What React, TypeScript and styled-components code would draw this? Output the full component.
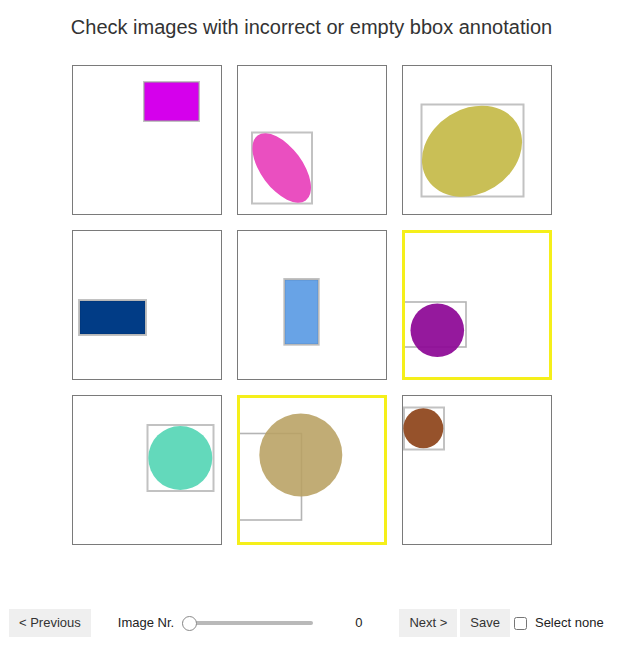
import React from "react";
import styled, { createGlobalStyle } from "styled-components";

const GlobalStyle = createGlobalStyle`
  html, body { margin: 0; padding: 0; background: #ffffff; }
  body { font-family: "Liberation Sans", Arial, sans-serif; color: #333333; }
`;

const Page = styled.div`
  width: 619px;
  height: 646px;
  padding-top: 15px;
  box-sizing: border-box;
`;

const Title = styled.h1`
  margin: 0;
  font-size: 20px;
  line-height: 24px;
  font-weight: normal;
  text-align: center;
  color: #333333;
  padding-left: 4px;
`;

const Grid = styled.div`
  margin: 26px 0 0 72px;
  display: grid;
  grid-template-columns: repeat(3, 150px);
  grid-auto-rows: 150px;
  gap: 15px;
`;

const Tile = styled.div<{ $selected: boolean }>`
  box-sizing: border-box;
  width: 150px;
  height: 150px;
  overflow: hidden;
  background: #ffffff;
  border: ${(p) => (p.$selected ? "3px solid #f5ef1a" : "1px solid #7a7a7a")};
`;

const Canvas = styled.svg`
  display: block;
`;

const Bar = styled.div`
  margin-top: 64px;
  height: 28px;
  display: flex;
  align-items: center;
  padding-left: 9px;
  font-size: 13px;
  line-height: 15px;
`;

const Button = styled.button<{ $ml?: number }>`
  height: 28px;
  padding: 0 10px 1px;
  border: none;
  background: #efefef;
  color: #333333;
  font-family: "Liberation Sans", Arial, sans-serif;
  font-size: 13px;
  margin-left: ${(p) => p.$ml ?? 0}px;
  cursor: pointer;
`;

const Label = styled.span<{ $ml?: number }>`
  margin-left: ${(p) => p.$ml ?? 0}px;
  margin-bottom: 1px;
  color: #222222;
  white-space: nowrap;
`;

const Slider = styled.input`
  -webkit-appearance: none;
  appearance: none;
  width: 131px;
  height: 16px;
  margin: 0 0 0 8px;
  background: transparent;
  &::-webkit-slider-runnable-track {
    height: 4px;
    background: #b9b9b9;
    border-radius: 2px;
  }
  &::-webkit-slider-thumb {
    -webkit-appearance: none;
    width: 15px;
    height: 15px;
    margin-top: -5.5px;
    border-radius: 50%;
    background: #ffffff;
    border: 1px solid #8a8a8a;
    box-sizing: border-box;
  }
`;

const Check = styled.input`
  width: 13px;
  height: 13px;
  margin: 0 0 0 4px;
`;

type Shape =
  | { kind: "rect"; x: number; y: number; w: number; h: number; fill: string }
  | { kind: "ellipse"; cx: number; cy: number; rx: number; ry: number; rot: number; fill: string; op?: number };

type TileData = {
  selected: boolean;
  bbox: { x: number; y: number; w: number; h: number };
  shape: Shape;
};

const tiles: TileData[] = [
  { selected: false, bbox: { x: 72, y: 17, w: 55, h: 39 }, shape: { kind: "rect", x: 72.5, y: 17.5, w: 54, h: 38, fill: "#d500ec" } },
  { selected: false, bbox: { x: 15, y: 67.5, w: 60, h: 71 }, shape: { kind: "ellipse", cx: 44.7, cy: 103, rx: 40.4, ry: 20.8, rot: 53.4, fill: "#ea4fc0" } },
  { selected: false, bbox: { x: 19.5, y: 39.5, w: 102, h: 92 }, shape: { kind: "ellipse", cx: 70, cy: 86.2, rx: 52.8, ry: 42.3, rot: -32.2, fill: "#c9bf56" } },
  { selected: false, bbox: { x: 7, y: 70, w: 67, h: 35 }, shape: { kind: "rect", x: 8, y: 71, w: 65, h: 33, fill: "#013c86" } },
  { selected: false, bbox: { x: 47.3, y: 49, w: 34.4, h: 65.7 }, shape: { kind: "rect", x: 48, y: 50, w: 33, h: 64, fill: "#68a3e6" } },
  { selected: true, bbox: { x: 1, y: 72, w: 63, h: 45 }, shape: { kind: "ellipse", cx: 35.3, cy: 100.3, rx: 26.8, ry: 26.8, rot: 0, fill: "#8d0896", op: 0.93 } },
  { selected: false, bbox: { x: 75.5, y: 30, w: 66, h: 66 }, shape: { kind: "ellipse", cx: 108.3, cy: 63, rx: 32, ry: 32, rot: 0, fill: "#63d9bb" } },
  { selected: true, bbox: { x: 1, y: 38.5, w: 63.5, h: 86.5 }, shape: { kind: "ellipse", cx: 63.8, cy: 60, rx: 41.5, ry: 41.5, rot: 0, fill: "#b8a062", op: 0.88 } },
  { selected: false, bbox: { x: 2, y: 12.5, w: 40, h: 42 }, shape: { kind: "ellipse", cx: 21.3, cy: 33.3, rx: 20, ry: 20, rot: 0, fill: "#96522b" } },
];

function ShapeView({ s }: { s: Shape }) {
  if (s.kind === "rect") {
    return <rect x={s.x} y={s.y} width={s.w} height={s.h} fill={s.fill} stroke="rgba(0,0,0,0.18)" strokeWidth={0.6} />;
  }
  return (
    <ellipse
      cx={s.cx}
      cy={s.cy}
      rx={s.rx}
      ry={s.ry}
      fill={s.fill}
      fillOpacity={s.op ?? 1}
      transform={`rotate(${s.rot} ${s.cx} ${s.cy})`}
    />
  );
}

function TileView({ t }: { t: TileData }) {
  const b = t.selected ? 3 : 1;
  const size = 150 - 2 * b;
  return (
    <Tile $selected={t.selected}>
      <Canvas width={size} height={size} viewBox={`${b} ${b} ${size} ${size}`}>
        <rect
          x={t.bbox.x}
          y={t.bbox.y}
          width={t.bbox.w}
          height={t.bbox.h}
          fill="none"
          stroke={t.selected ? "#b4b4b4" : "#c2c2c2"}
          strokeWidth={t.selected ? 1.6 : 2}
        />
        <ShapeView s={t.shape} />
      </Canvas>
    </Tile>
  );
}

export default function App() {
  return (
    <>
      <GlobalStyle />
      <Page>
        <Title>Check images with incorrect or empty bbox annotation</Title>
        <Grid>
          {tiles.map((t, i) => (
            <TileView key={i} t={t} />
          ))}
        </Grid>
        <Bar>
          <Button>&lt; Previous</Button>
          <Label $ml={27}>Image Nr.</Label>
          <Slider type="range" min={0} max={8} defaultValue={0} />
          <Label $ml={42}>0</Label>
          <Button $ml={37}>Next &gt;</Button>
          <Button $ml={3}>Save</Button>
          <Check type="checkbox" />
          <Label $ml={8}>Select none</Label>
        </Bar>
      </Page>
    </>
  );
}
